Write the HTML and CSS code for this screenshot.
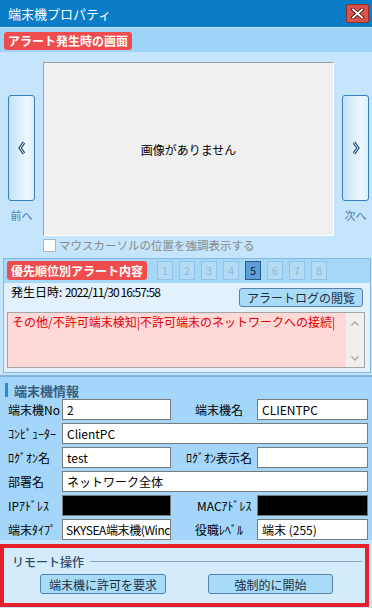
FILE: index.html
```html
<!DOCTYPE html>
<html lang="ja">
<head>
<meta charset="utf-8">
<title>端末機プロパティ</title>
<link rel="stylesheet" href="styles.css">
</head>
<body>
<div class="window">
  <div class="titlebar">
    <span class="title">端末機プロパティ</span>
    <div class="close">
      <svg width="13" height="11" viewBox="0 0 13 11"><path d="M2 1.5 L11 9.5 M11 1.5 L2 9.5" stroke="#5a1414" stroke-width="3.6" stroke-linecap="square"/><path d="M2 1.5 L11 9.5 M11 1.5 L2 9.5" stroke="#fff" stroke-width="1.8" stroke-linecap="square"/></svg>
    </div>
  </div>

  <section class="s1">
    <div class="band"><span class="tag">アラート発生時の画面</span></div>
    <div class="viewer">
      <div class="nav">
        <div class="navbtn">
          <svg width="10" height="14" viewBox="0 0 10 14"><path d="M7 1.5 L3 7 L7 12.5" fill="none" stroke="#1f4e7c" stroke-width="3"/><path d="M7 1.5 L3 7 L7 12.5" fill="none" stroke="#eef6fd" stroke-width="1"/></svg>
        </div>
        <span class="navlabel">前へ</span>
      </div>
      <div class="center">
        <div class="image">画像がありません</div>
        <div class="chk"><span class="box"></span><span>マウスカーソルの位置を強調表示する</span></div>
      </div>
      <div class="nav">
        <div class="navbtn">
          <svg width="10" height="14" viewBox="0 0 10 14"><path d="M3 1.5 L7 7 L3 12.5" fill="none" stroke="#1f4e7c" stroke-width="3"/><path d="M3 1.5 L7 7 L3 12.5" fill="none" stroke="#eef6fd" stroke-width="1"/></svg>
        </div>
        <span class="navlabel">次へ</span>
      </div>
    </div>
  </section>

  <section class="s2">
    <div class="band2">
      <span class="tag tag2">優先順位別アラート内容</span>
      <div class="pages">
        <span class="pg">1</span><span class="pg">2</span><span class="pg">3</span><span class="pg">4</span><span class="pg sel">5</span><span class="pg">6</span><span class="pg">7</span><span class="pg">8</span>
      </div>
    </div>
    <div class="body2">
      <div class="daterow">
        <span class="date">発生日時: <span class="num">2022/11/30 16:57:58</span></span>
        <span class="btn logbtn">アラートログの閲覧</span>
      </div>
      <div class="memo">
        <div class="memotext">その他/不許可端末検知|不許可端末のネットワークへの接続|</div>
        <div class="scroll">
          <svg width="10" height="7" viewBox="0 0 10 7"><path d="M1.5 5.5 L5 2 L8.5 5.5" fill="none" stroke="#a8a8a8" stroke-width="1.3"/></svg>
          <svg width="10" height="7" viewBox="0 0 10 7"><path d="M1.5 1.5 L5 5 L8.5 1.5" fill="none" stroke="#a8a8a8" stroke-width="1.3"/></svg>
        </div>
      </div>
    </div>
  </section>

  <section class="s3">
    <div class="head3"><span class="bar"></span><span>端末機情報</span></div>
    <div class="grid">
      <span class="lbl">端末機No</span>
      <span class="field">2</span>
      <span class="lbl lbl2">端末機名</span>
      <span class="field">CLIENTPC</span>

      <span class="lbl">ｺﾝﾋﾟｭｰﾀｰ</span>
      <span class="field wide">ClientPC</span>

      <span class="lbl">ﾛｸﾞｵﾝ名</span>
      <span class="field">test</span>
      <span class="lbl lbl2 lbl-wide">ﾛｸﾞｵﾝ表示名</span>
      <span class="field"></span>

      <span class="lbl">部署名</span>
      <span class="field wide">ネットワーク全体</span>

      <span class="lbl">IPｱﾄﾞﾚｽ</span>
      <span class="field black"></span>
      <span class="lbl lbl2 lbl-mac">MACｱﾄﾞﾚｽ</span>
      <span class="field black"></span>

      <span class="lbl">端末ﾀｲﾌﾟ</span>
      <span class="field tight">SKYSEA端末機(Winc</span>
      <span class="lbl lbl2">役職ﾚﾍﾞﾙ</span>
      <span class="field">端末 (255)</span>
    </div>
  </section>

  <section class="remote">
    <div class="group">
      <div class="legend"><span class="legtext">リモート操作</span><span class="legline"></span></div>
      <div class="rbtns">
        <span class="btn rbtn">端末機に許可を要求</span>
        <span class="btn rbtn">強制的に開始</span>
      </div>
    </div>
  </section>
</div>
</body>
</html>
```

FILE: styles.css
```css
* { box-sizing: border-box; margin: 0; padding: 0; }

body {
  margin: 0;
  width: 372px;
  height: 608px;
  overflow: hidden;
  font-family: "Noto Sans CJK JP", "Noto Sans", sans-serif;
  font-size: 12px;
  color: #000;
  background: #c4e5fb;
}

.window {
  width: 372px;
  height: 608px;
  display: flex;
  flex-direction: column;
  background: #c4e5fb;
}

/* title bar */
.titlebar {
  height: 28px;
  background: #0b7cc7;
  border-bottom: 1px solid #c2e4fb;
  display: flex;
  align-items: center;
  justify-content: space-between;
  padding: 0 3px 0 8px;
  color: #fff;
  font-size: 13px;
}
.title { line-height: 1; margin-top: -1px; }
.close {
  width: 23px;
  height: 19px;
  margin-top: -1px;
  background: #d8534c;
  border: 1px solid #8d2f2a;
  border-radius: 2px;
  display: flex;
  align-items: center;
  justify-content: center;
}

/* section 1 */
.band {
  height: 24px;
  background: #9ed5f6;
  padding: 4px 0 0 4px;
  display: flex;
}
.tag {
  height: 18px;
  padding: 0 4px;
  background: #ef4d4d;
  color: #fff;
  font-weight: bold;
  font-size: 12px;
  line-height: 18px;
  border-radius: 3px;
  display: inline-block;
}

.viewer {
  display: flex;
  gap: 8px;
  padding: 10px 3px 0 8px;
}
.nav {
  width: 27px;
  display: flex;
  flex-direction: column;
  align-items: center;
  padding-top: 33px;
}
.navbtn {
  width: 27px;
  height: 106px;
  border: 1px solid #3a7fbd;
  border-radius: 3px;
  background: linear-gradient(to right, #c3e2f9, #eef7fe 70%, #dbeefc);
  display: flex;
  align-items: center;
  justify-content: center;
}
.navlabel {
  margin-top: 6px;
  font-size: 11px;
  color: #4a7db3;
}
.center {
  width: 291px;
  display: flex;
  flex-direction: column;
}
.image {
  height: 174px;
  background: #f0f0f0;
  border-top: 1px solid #a0a0a0;
  border-left: 1px solid #a0a0a0;
  border-right: 1px solid #fff;
  border-bottom: 1px solid #fff;
  display: flex;
  align-items: center;
  justify-content: center;
  font-size: 12px;
  color: #000;
}
.chk {
  margin-top: 2px;
  height: 14px;
  display: flex;
  align-items: center;
  gap: 3px;
  font-size: 11.5px;
  color: #8a8a8a;
  white-space: nowrap;
}
.box {
  width: 13px;
  height: 13px;
  background: #fff;
  border: 1px solid #b4b4b4;
  flex: none;
}

/* section 2 */
.s2 {
  margin: 6px 1px 0 3px;
  border: 1px solid #86b9e0;
}
.band2 {
  height: 24px;
  background: #a5d7f7;
  padding: 2px 0 0 3px;
  display: flex;
  gap: 10px;
}
.tag2 { height: 19px; line-height: 19px; }
.pages { display: flex; gap: 6px; }
.pg {
  width: 16px;
  height: 19px;
  background: #b3dbf6;
  border: 1px solid #93c3e6;
  color: #98b6cf;
  font-size: 11px;
  line-height: 17px;
  text-align: center;
}
.pg.sel {
  background: #5c9ed5;
  border-color: #2c5a86;
  color: #0d2338;
}
.body2 {
  background: #e2f1fc;
  padding: 5px 7px 4px 3px;
}
.daterow {
  height: 19px;
  display: flex;
  align-items: flex-start;
  justify-content: space-between;
}
.date {
  padding-left: 4px;
  font-size: 12px;
  line-height: 14px;
  margin-top: -3px;
  white-space: nowrap;
}
.num { font-size: 12px; letter-spacing: -0.9px; }
.btn {
  display: inline-flex;
  align-items: center;
  justify-content: center;
  background: #a7dbf8;
  border: 1px solid #5681a8;
  border-radius: 3px;
  color: #1f2f40;
  font-size: 12px;
}
.logbtn { width: 124px; height: 19px; }
.memo {
  margin-top: 5px;
  margin-right: -2px;
  height: 56px;
  border: 1px solid #a5a5a5;
  background: #ffd8d8;
  display: flex;
}
.memotext {
  flex: 1;
  padding: 1px 4px;
  color: #e60000;
  font-size: 12px;
  line-height: 16px;
  white-space: nowrap;
  overflow: hidden;
}
.scroll {
  width: 18px;
  background: #efefef;
  display: flex;
  flex-direction: column;
  justify-content: space-between;
  align-items: center;
  padding: 7px 0 5px;
}

/* section 3 */
.s3 {
  margin-top: 2px;
  background: #a3d6f8;
  border-top: 2px solid #86b3da;
  padding-top: 6px;
}
.head3 {
  height: 14px;
  display: flex;
  align-items: center;
  gap: 6px;
  padding-left: 5px;
  font-size: 13px;
  font-weight: bold;
  color: #3b5c7e;
}
.bar {
  width: 3px;
  height: 14px;
  background: #1b8fe0;
}
.grid {
  margin-top: 2px;
  padding-left: 8px;
  display: grid;
  grid-template-columns: 54px 109px 86px 111px;
  grid-auto-rows: 21px;
  row-gap: 3px;
}
.lbl {
  font-size: 12px;
  line-height: 21px;
  white-space: nowrap;
}
.lbl2 { padding-left: 24px; }
.lbl-wide { padding-left: 15px; }
.lbl-mac { padding-left: 26px; }
.field {
  border: 1px solid #7a7a7a;
  background: #fff;
  padding-left: 4px;
  font-size: 12px;
  line-height: 19px;
  white-space: nowrap;
  overflow: hidden;
}
.field.tight { letter-spacing: -0.4px; padding-left: 3px; }
.field.wide { grid-column: 2 / 5; }
.field.black { background: #000; }

/* remote */
.remote {
  margin-top: 4px;
  width: 369px;
  height: 63px;
  border: 4px solid #e5202a;
  background: #d3ebfa;
}
.group {
  padding: 6px 0 0 0;
}
.legend {
  display: flex;
  align-items: center;
  gap: 6px;
  padding-left: 8px;
  height: 14px;
}
.legtext {
  font-size: 12px;
  color: #2d4a68;
  font-weight: 500;
}
.legline {
  flex: 1;
  height: 1px;
  background: #8aa8c6;
  margin-right: 3px;
}
.rbtns {
  margin-top: 6px;
  padding-left: 36px;
  display: flex;
  gap: 42px;
}
.rbtn { width: 126px; height: 20px; }
.rbtn + .rbtn { width: 125px; }
```
